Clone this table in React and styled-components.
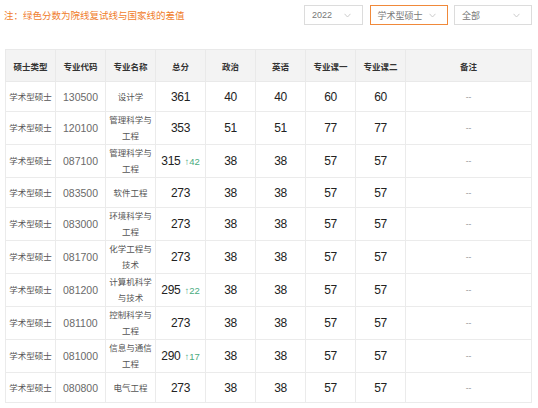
import React from "react";
import styled, { createGlobalStyle } from "styled-components";

const Global = createGlobalStyle`
  html, body { margin: 0; padding: 0; background: #fff; }
  body { font-family: "Liberation Sans", "Noto Sans CJK SC", sans-serif; }
`;

const Page = styled.div`
  padding: 5px 6px 0 5px;
  width: 538px;
  box-sizing: border-box;
`;

const Toolbar = styled.div`
  display: flex;
  align-items: center;
  justify-content: space-between;
  height: 20px;
`;

const Note = styled.div`
  font-size: 9.5px;
  color: #f07d2c;
  margin-left: -1px;
  white-space: nowrap;
`;

const Filters = styled.div`
  display: flex;
  gap: 6.5px;
`;

const Select = styled.div`
  box-sizing: border-box;
  width: ${(p) => p.$w}px;
  height: 20px;
  border: 1px solid ${(p) => (p.$active ? "#f0893a" : "#dcdcdc")};
  display: flex;
  align-items: center;
  justify-content: space-between;
  padding: 0 11px 0 7px;
  font-size: 9px;
  color: #777;
`;

const Chevron = () => (
  <svg width="7" height="5" viewBox="0 0 7 5">
    <polyline points="0.5,0.8 3.5,4 6.5,0.8" fill="none" stroke="#c6c6c6" strokeWidth="0.9" />
  </svg>
);

const Table = styled.table`
  margin-top: 24px;
  border-collapse: collapse;
  table-layout: fixed;
  width: 527px;
`;

const Th = styled.th`
  height: 31px;
  padding: 0;
  background: #f3f3f3;
  border: 1px solid #e9e9e9;
  font-size: 8.5px;
  font-weight: bold;
  color: #333;
  text-align: center;
`;

const Td = styled.td`
  height: 29px;
  padding: 0 2px;
  border: 1px solid #ebebeb;
  text-align: center;
  vertical-align: middle;
  font-size: ${(p) =>
    p.$kind === "code" ? "10.5px" : p.$kind === "score" ? "12px" : p.$kind === "remark" ? "8.5px" : "8.5px"};
  color: ${(p) =>
    p.$kind === "code" ? "#6a6a6a" : p.$kind === "score" ? "#222" : p.$kind === "remark" ? "#999" : "#555"};
  letter-spacing: ${(p) => (p.$kind === "score" ? "-0.3px" : "0")};
  line-height: 16px;
`;

const Diff = styled.span`
  font-size: 9.5px;
  color: #4aab80;
  margin-left: 4px;
  letter-spacing: 0;
`;

const rows = [
  ["130500", "设计学", 361, null, 40, 40, 60, 60],
  ["120100", "管理科学与工程", 353, null, 51, 51, 77, 77],
  ["087100", "管理科学与工程", 315, 42, 38, 38, 57, 57],
  ["083500", "软件工程", 273, null, 38, 38, 57, 57],
  ["083000", "环境科学与工程", 273, null, 38, 38, 57, 57],
  ["081700", "化学工程与技术", 273, null, 38, 38, 57, 57],
  ["081200", "计算机科学与技术", 295, 22, 38, 38, 57, 57],
  ["081100", "控制科学与工程", 273, null, 38, 38, 57, 57],
  ["081000", "信息与通信工程", 290, 17, 38, 38, 57, 57],
  ["080800", "电气工程", 273, null, 38, 38, 57, 57],
];

const headers = ["硕士类型", "专业代码", "专业名称", "总分", "政治", "英语", "专业课一", "专业课二", "备注"];

export default function App() {
  return (
    <Page>
      <Global />
      <Toolbar>
        <Note>注：绿色分数为院线复试线与国家线的差值</Note>
        <Filters>
          <Select $w={59}>
            <span>2022</span>
            <Chevron />
          </Select>
          <Select $w={78} $active>
            <span>学术型硕士</span>
            <Chevron />
          </Select>
          <Select $w={78}>
            <span>全部</span>
            <Chevron />
          </Select>
        </Filters>
      </Toolbar>
      <Table>
        <colgroup>
          {[0, 1, 2, 3, 4, 5, 6, 7].map((i) => (
            <col key={i} style={{ width: 50 }} />
          ))}
          <col />
        </colgroup>
        <thead>
          <tr>
            {headers.map((h) => (
              <Th key={h}>{h}</Th>
            ))}
          </tr>
        </thead>
        <tbody>
          {rows.map((r) => (
            <tr key={r[0] + r[1]}>
              <Td>学术型硕士</Td>
              <Td $kind="code">{r[0]}</Td>
              <Td>{r[1]}</Td>
              <Td $kind="score">
                {r[2]}
                {r[3] != null && <Diff>↑{r[3]}</Diff>}
              </Td>
              <Td $kind="score">{r[4]}</Td>
              <Td $kind="score">{r[5]}</Td>
              <Td $kind="score">{r[6]}</Td>
              <Td $kind="score">{r[7]}</Td>
              <Td $kind="remark">--</Td>
            </tr>
          ))}
        </tbody>
      </Table>
    </Page>
  );
}
